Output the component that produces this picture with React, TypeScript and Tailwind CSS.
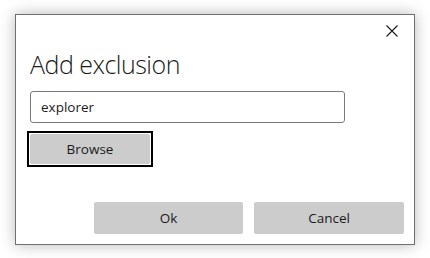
import React from "react";

export default function App() {
  return (
    <div
      className="w-[430px] h-[258px] bg-white pl-[15px] pt-[14px]"
      style={{ fontFamily: '"Open Sans", "Noto Sans", sans-serif' }}
    >
      <div className="w-[400px] h-[231px] border border-[#6f6f6f] bg-white shadow-[0_0_14px_rgba(0,0,0,0.28)] flex flex-col">
        <div className="flex justify-end pt-[10px] pr-[16px]">
          <svg width="12" height="12" viewBox="0 0 12 12" className="block">
            <path d="M0.5 0.5 L11.5 11.5 M11.5 0.5 L0.5 11.5" stroke="#1a1a1a" strokeWidth="1.1" />
          </svg>
        </div>
        <div className="pl-[14px] pt-[11px] text-[25px] font-light leading-[32px] text-[#1a1a1a] tracking-[-0.5px]">
          Add exclusion
        </div>
        <div className="pl-[14px] pt-[11px]">
          <div className="w-[315px] h-[32px] border border-[#7a7a7a] rounded-[3px] flex items-center pl-[10px] text-[13.5px] text-[#1a1a1a]">
            explorer
          </div>
        </div>
        <div className="pl-[11px] pt-[8px]">
          <div className="w-[126px] h-[36px] border-2 border-black p-[1px]">
            <div className="w-full h-full bg-[#cccccc] rounded-[2px] flex items-center justify-center text-[13.5px] text-[#1a1a1a]">
              Browse
            </div>
          </div>
        </div>
        <div className="flex-1" />
        <div className="flex justify-end gap-[11px] pr-[10px] pb-[10px]">
          <div className="w-[149px] h-[32px] bg-[#cccccc] rounded-[2px] flex items-center justify-center text-[13.5px] text-[#1a1a1a]">
            Ok
          </div>
          <div className="w-[150px] h-[32px] bg-[#cccccc] rounded-[2px] flex items-center justify-center text-[13.5px] text-[#1a1a1a]">
            Cancel
          </div>
        </div>
      </div>
    </div>
  );
}
